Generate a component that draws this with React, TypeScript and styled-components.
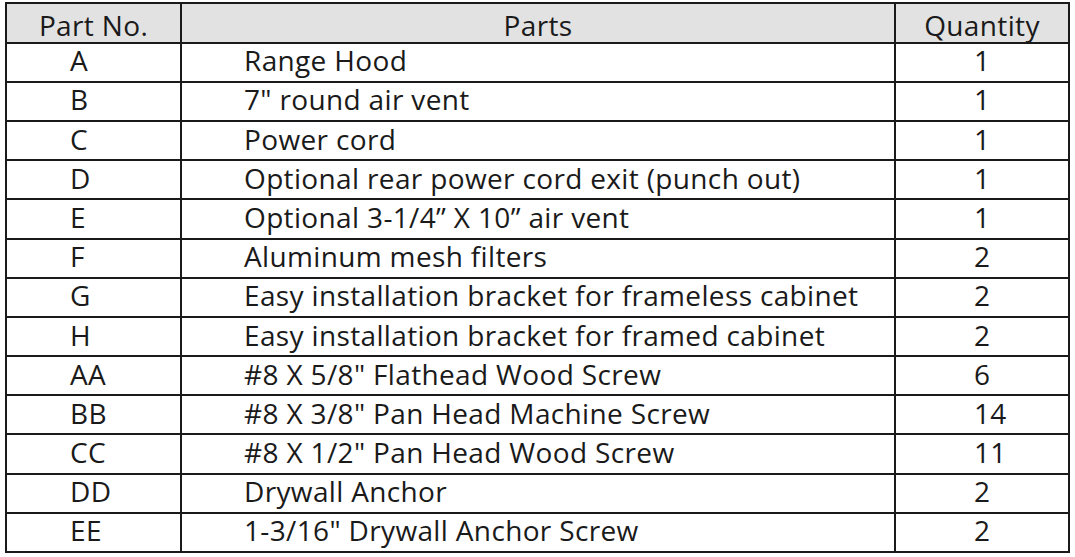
import styled, { createGlobalStyle } from "styled-components";

interface PartRow {
  code: string;
  name: string;
  qty: number;
}

const parts: PartRow[] = [
  { code: "A", name: "Range Hood", qty: 1 },
  { code: "B", name: '7" round air vent', qty: 1 },
  { code: "C", name: "Power cord", qty: 1 },
  { code: "D", name: "Optional rear power cord exit (punch out)", qty: 1 },
  { code: "E", name: "Optional 3-1/4\u201D X 10\u201D air vent", qty: 1 },
  { code: "F", name: "Aluminum mesh filters", qty: 2 },
  { code: "G", name: "Easy installation bracket for frameless cabinet", qty: 2 },
  { code: "H", name: "Easy installation bracket for framed cabinet", qty: 2 },
  { code: "AA", name: '#8 X 5/8" Flathead Wood Screw', qty: 6 },
  { code: "BB", name: '#8 X 3/8" Pan Head Machine Screw', qty: 14 },
  { code: "CC", name: '#8 X 1/2" Pan Head Wood Screw', qty: 11 },
  { code: "DD", name: "Drywall Anchor", qty: 2 },
  { code: "EE", name: '1-3/16" Drywall Anchor Screw', qty: 2 },
];

const GlobalStyle = createGlobalStyle`
  html, body {
    margin: 0;
    padding: 0;
    background: #ffffff;
  }
  body {
    font-family: "Open Sans", "Noto Sans", sans-serif;
    color: #1a1a1a;
  }
`;

const Page = styled.div`
  padding: 2px 0 0 5px;
`;

const Table = styled.table`
  width: 1065px;
  border-collapse: collapse;
  table-layout: fixed;
  font-size: 28px;
  line-height: 1;
  letter-spacing: 0.35px;
`;

const HeadRow = styled.tr`
  height: 39.6px;
  background: #e2e2e2;
`;

const Row = styled.tr`
  height: 39.2px;
`;

const HeadCell = styled.th<{ $width?: number }>`
  width: ${(p) => (p.$width ? `${p.$width}px` : "auto")};
  border: 2px solid #1a1a1a;
  font-weight: 400;
  text-align: center;
  padding: 4px 0 0;
`;

const Cell = styled.td<{ $indent: number }>`
  border: 2px solid #1a1a1a;
  padding: 0 0 4px ${(p) => p.$indent}px;
  text-align: left;
  white-space: nowrap;
`;

export default function App() {
  return (
    <Page>
      <GlobalStyle />
      <Table>
        <thead>
          <HeadRow>
            <HeadCell $width={173}>Part No.</HeadCell>
            <HeadCell>Parts</HeadCell>
            <HeadCell $width={172}>Quantity</HeadCell>
          </HeadRow>
        </thead>
        <tbody>
          {parts.map((p) => (
            <Row key={p.code}>
              <Cell $indent={63}>{p.code}</Cell>
              <Cell $indent={62}>{p.name}</Cell>
              <Cell $indent={78}>{p.qty}</Cell>
            </Row>
          ))}
        </tbody>
      </Table>
    </Page>
  );
}
